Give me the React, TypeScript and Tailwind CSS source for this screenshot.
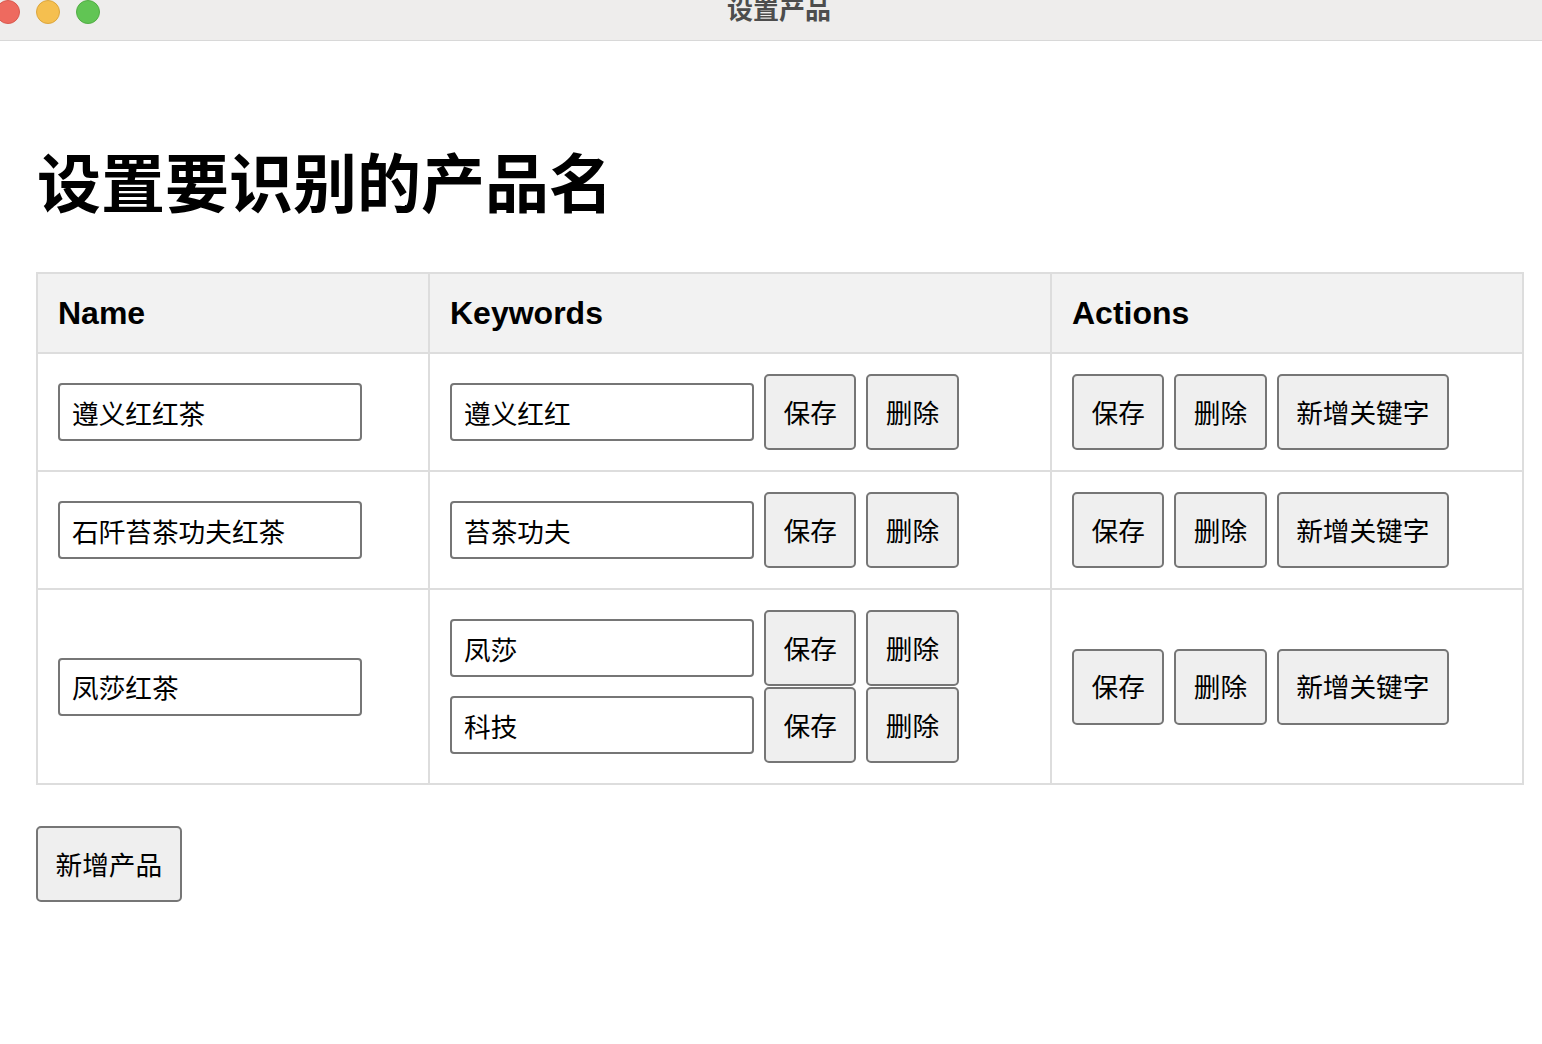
import React from "react";

const cjk = { fontFamily: '"Noto Sans CJK SC", "Liberation Sans", sans-serif' };

function Btn({ children }: { children: React.ReactNode }) {
  return (
    <button className="h-[76px] px-[17.5px] border-2 border-[#767676] rounded-[5px] bg-[#efefef] text-[26.67px] text-black leading-none shrink-0 font-['Noto_Sans_CJK_SC',sans-serif]">
      {children}
    </button>
  );
}

function Input({ value }: { value: string }) {
  return (
    <input
      defaultValue={value}
      className="w-[304px] h-[58px] border-2 border-[#767676] rounded-[4px] pl-[12px] text-[26.67px] text-black bg-white outline-none shrink-0 font-['Noto_Sans_CJK_SC',sans-serif]"
    />
  );
}

const rows = [
  { name: "遵义红红茶", keywords: ["遵义红红"] },
  { name: "石阡苔茶功夫红茶", keywords: ["苔茶功夫"] },
  { name: "凤莎红茶", keywords: ["凤莎", "科技"] },
];

export default function App() {
  return (
    <div className="w-[1542px] h-[1044px] bg-white overflow-hidden" style={cjk}>
      <div className="relative h-[41px] bg-[#eeedec] border-b border-[#d8d8d8] flex items-start">
        <div className="flex gap-[16px] ml-[-4px] mt-0">
          <div className="w-[24px] h-[24px] rounded-full bg-[#ee6a5f] border border-[#d95a4f]" />
          <div className="w-[24px] h-[24px] rounded-full bg-[#f5bf4f] border border-[#dca63d]" />
          <div className="w-[24px] h-[24px] rounded-full bg-[#61c554] border border-[#52ad45]" />
        </div>
        <div className="absolute left-0 right-0 top-[-5px] text-center text-[26px] leading-[26px] font-bold text-[#4d4d4d] pl-[16px]">
          设置产品
        </div>
      </div>

      <div className="pl-[36px]">
        <h1 className="mt-[106px] h-[64px] text-[64px] leading-[64px] font-bold text-black pl-[1px]">
          设置要识别的产品名
        </h1>

        <table className="mt-[61px] border-collapse table-fixed w-[1486px]">
          <colgroup>
            <col className="w-[392px]" />
            <col className="w-[622px]" />
            <col className="w-[472px]" />
          </colgroup>
          <thead>
            <tr className="bg-[#f2f2f2] h-[80px]">
              {["Name", "Keywords", "Actions"].map((h) => (
                <th
                  key={h}
                  className="border-2 border-[#dddddd] text-left px-[20px] text-[32px] font-bold text-black font-['Liberation_Sans',sans-serif]"
                >
                  {h}
                </th>
              ))}
            </tr>
          </thead>
          <tbody>
            {rows.map((r) => (
              <tr key={r.name}>
                <td className="border-2 border-[#dddddd] px-[20px] py-[20px] align-middle">
                  <Input value={r.name} />
                </td>
                <td className="border-2 border-[#dddddd] px-[20px] py-[20px] align-middle">
                  <div className="flex flex-col gap-[1px]">
                    {r.keywords.map((k) => (
                      <div key={k} className="flex items-center gap-[10px]">
                        <Input value={k} />
                        <Btn>保存</Btn>
                        <Btn>删除</Btn>
                      </div>
                    ))}
                  </div>
                </td>
                <td className="border-2 border-[#dddddd] px-[20px] py-[20px] align-middle">
                  <div className="flex items-center gap-[10px]">
                    <Btn>保存</Btn>
                    <Btn>删除</Btn>
                    <Btn>新增关键字</Btn>
                  </div>
                </td>
              </tr>
            ))}
          </tbody>
        </table>

        <div className="mt-[41px]">
          <Btn>新增产品</Btn>
        </div>
      </div>
    </div>
  );
}
